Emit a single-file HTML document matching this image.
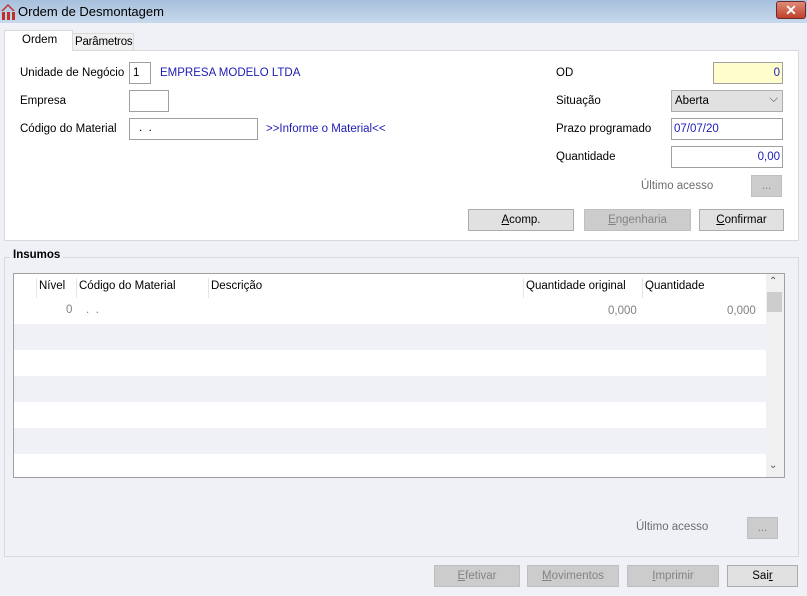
<!DOCTYPE html><html><head><style>
*{margin:0;padding:0;box-sizing:border-box}
body{width:807px;height:596px;background:#f0f1f6;font-family:"Liberation Sans",sans-serif;font-size:11.5px;color:#000;position:relative;overflow:hidden}
.a{position:absolute;white-space:nowrap}
.in{position:absolute;background:#fff;border:1px solid #a0a0a0;}
.btn{position:absolute;border:1px solid #adadad;background:#e1e1e1;text-align:center;line-height:20px;font-size:11.5px}
.dis{background:#cccccc;border-color:#bfbfbf;color:#838383}
u{text-decoration:underline}
</style></head><body>
<div class="a" style="left:0;top:0;width:807px;height:23px;background:linear-gradient(#a7c0dc,#c8d9ec)"></div>
<svg class="a" style="left:1px;top:3px" width="15" height="17" viewBox="0 0 15 17"><path d="M0 8 L7 1 L14 8 L12 8 L7 3 L2 8Z" fill="#c0302a"/><rect x="1" y="9" width="3" height="8" fill="#c0302a"/><rect x="6" y="9" width="3" height="8" fill="#c0302a"/><rect x="11" y="9" width="3" height="8" fill="#c0302a"/></svg>
<div class="a" style="left:18px;top:4px;font-size:13px;color:#000">Ordem de Desmontagem</div>
<div class="a" style="left:776px;top:1px;width:30px;height:18px;background:linear-gradient(#e08a78,#c0402c);border:1px solid #6b2a2a;border-radius:3px;color:#fff;font-weight:bold;text-align:center;line-height:16px;font-size:14px">✕</div>
<div class="a" style="left:4px;top:50px;width:795px;height:191px;background:#fff;border:1px solid #d9d9d9"></div>
<div class="a" style="left:4px;top:30px;width:69px;height:21px;background:#fff;border:1px solid #d9d9d9;border-bottom:none;padding:3px 0 0 17px">Ordem</div>
<div class="a" style="left:72px;top:33px;width:62px;height:17px;background:#f0f0f0;border:1px solid #d9d9d9;border-bottom:none;padding:2px 0 0 2px;letter-spacing:-0.2px">Parâmetros</div>
<div class="a" style="left:20px;top:67px">Unidade de Negócio</div>
<div class="in" style="left:129px;top:62px;width:22px;height:22px;padding:4px 0 0 3px">1</div>
<div class="a" style="left:160px;top:67px;color:#1c1cb4">EMPRESA MODELO LTDA</div>
<div class="a" style="left:20px;top:95px">Empresa</div>
<div class="in" style="left:129px;top:90px;width:40px;height:22px"></div>
<div class="a" style="left:20px;top:123px">Código do Material</div>
<div class="in" style="left:129px;top:118px;width:129px;height:22px;padding:3px 0 0 9px">.&nbsp;&nbsp;.</div>
<div class="a" style="left:266px;top:123px;color:#1c1cb4">&gt;&gt;Informe o Material&lt;&lt;</div>
<div class="a" style="left:556px;top:67px">OD</div>
<div class="in" style="left:713px;top:62px;width:70px;height:22px;background:#fffdcc;text-align:right;padding:4px 2px 0 0;color:#1c1cb4">0</div>
<div class="a" style="left:556px;top:95px">Situação</div>
<div class="in" style="left:671px;top:90px;width:112px;height:22px;background:#e1e1e1;border-color:#adadad;padding:4px 0 0 3px">Aberta<span style="position:absolute;right:4px;top:2px;color:#555">⌵</span></div>
<div class="a" style="left:556px;top:123px">Prazo programado</div>
<div class="in" style="left:671px;top:118px;width:112px;height:22px;padding:4px 0 0 2px;color:#1c1cb4">07/07/20</div>
<div class="a" style="left:556px;top:151px">Quantidade</div>
<div class="in" style="left:671px;top:146px;width:112px;height:22px;text-align:right;padding:4px 2px 0 0;color:#1c1cb4">0,00</div>
<div class="a" style="left:641px;top:180px;color:#6d6d6d">Último acesso</div>
<div class="btn dis" style="left:751px;top:175px;width:31px;height:22px">...</div>
<div class="btn" style="left:468px;top:209px;width:106px;height:22px"><u>A</u>comp.</div>
<div class="btn dis" style="left:584px;top:209px;width:107px;height:22px"><u>E</u>ngenharia</div>
<div class="btn" style="left:699px;top:209px;width:85px;height:22px"><u>C</u>onfirmar</div>
<div class="a" style="left:4px;top:257px;width:795px;height:300px;border:1px solid #d9d9d9"></div>
<div class="a" style="left:10px;top:249px;background:#f0f1f6;padding:0 3px;font-weight:bold">Insumos</div>
<div class="a" style="left:13px;top:273px;width:772px;height:205px;background:#fff;border:1px solid #a0a0a0;overflow:hidden">
<div class="a" style="left:0;top:50px;width:752px;height:26px;background:#f0f1f6"></div>
<div class="a" style="left:0;top:102px;width:752px;height:26px;background:#f0f1f6"></div>
<div class="a" style="left:0;top:154px;width:752px;height:26px;background:#f0f1f6"></div>
<div class="a" style="left:22px;top:4px;width:1px;height:20px;background:#e5e5e5"></div>
<div class="a" style="left:62px;top:4px;width:1px;height:20px;background:#e5e5e5"></div>
<div class="a" style="left:194px;top:4px;width:1px;height:20px;background:#e5e5e5"></div>
<div class="a" style="left:509px;top:4px;width:1px;height:20px;background:#e5e5e5"></div>
<div class="a" style="left:628px;top:4px;width:1px;height:20px;background:#e5e5e5"></div>
<div class="a" style="left:25px;top:6px">Nível</div>
<div class="a" style="left:65px;top:6px">Código do Material</div>
<div class="a" style="left:197px;top:6px">Descrição</div>
<div class="a" style="left:512px;top:6px">Quantidade original</div>
<div class="a" style="left:631px;top:6px">Quantidade</div>
<div class="a" style="left:52px;top:30px;color:#808080">0</div>
<div class="a" style="left:72px;top:30px;color:#808080">.&nbsp;&nbsp;.</div>
<div class="a" style="left:594px;top:31px;color:#808080">0,000</div>
<div class="a" style="left:713px;top:31px;color:#808080">0,000</div>
<div class="a" style="left:752px;top:0;width:18px;height:203px;background:#f0f0f0"></div>
<div class="a" style="left:755px;top:2px;font-size:10px;color:#555">⌃</div>
<div class="a" style="left:753px;top:18px;width:15px;height:20px;background:#cdcdcd"></div>
<div class="a" style="left:755px;top:186px;font-size:10px;color:#555">⌄</div>
</div>
<div class="a" style="left:636px;top:521px;color:#6d6d6d">Último acesso</div>
<div class="btn dis" style="left:747px;top:517px;width:31px;height:22px">...</div>
<div class="btn dis" style="left:434px;top:565px;width:86px;height:22px"><u>E</u>fetivar</div>
<div class="btn dis" style="left:527px;top:565px;width:92px;height:22px"><u>M</u>ovimentos</div>
<div class="btn dis" style="left:627px;top:565px;width:92px;height:22px"><u>I</u>mprimir</div>
<div class="btn" style="left:727px;top:565px;width:71px;height:22px">Sai<u>r</u></div>
</body></html>
